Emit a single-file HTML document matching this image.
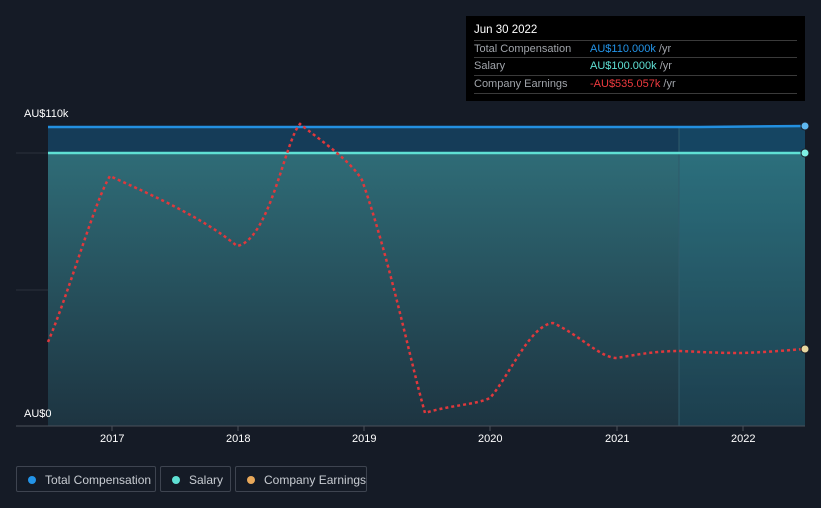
<!DOCTYPE html>
<html><head><style>
body{margin:0;background:#151b26;font-family:"Liberation Sans",sans-serif;}
.wrap{position:relative;width:821px;height:508px;overflow:hidden;background:#151b26;}
.tip{position:absolute;left:466px;top:16px;width:339px;height:85px;background:#000;color:#fff;font-size:11px;}
.tip .h{position:absolute;left:8px;top:8px;font-size:11.5px;}
.row{position:absolute;left:8px;width:323px;height:17px;border-top:1px solid #3a3a3a;color:#a0a4aa;line-height:17px;white-space:nowrap;}
.row span{position:absolute;left:116px;}
.leg{position:absolute;top:466px;height:26px;border:1px solid #3e4450;border-radius:2px;color:#c8ccd2;font-size:12px;line-height:26px;box-sizing:border-box;white-space:nowrap;}
.leg i{position:absolute;left:11px;top:9px;width:8px;height:8px;border-radius:50%;}
.leg b{font-weight:normal;position:absolute;left:28px;}
.ax{position:absolute;color:#fff;font-size:11px;}
</style></head><body><div class="wrap">
<svg width="821" height="508" style="position:absolute;left:0;top:0">
<defs>
<linearGradient id="g" x1="0" y1="0" x2="0" y2="1"><stop offset="0" stop-color="#2f6c77"/><stop offset="1" stop-color="#1d3441"/></linearGradient>
</defs>
<rect x="48" y="153" width="757" height="273" fill="url(#g)"/>
<rect x="48" y="127" width="757" height="26" fill="#153c58"/>
<rect x="679" y="127" width="126" height="299" fill="#1c8fb0" opacity="0.12"/>
<line x1="679" y1="127" x2="679" y2="426" stroke="#2f5a6a" stroke-width="1"/>
<line x1="16" y1="153" x2="48" y2="153" stroke="#2a313c"/>
<line x1="16" y1="290" x2="48" y2="290" stroke="#2a313c"/>
<line x1="16" y1="426" x2="805" y2="426" stroke="#4a505a"/>
<g stroke="#4a505a"><line x1="112" y1="426" x2="112" y2="431"/><line x1="238" y1="426" x2="238" y2="431"/><line x1="364" y1="426" x2="364" y2="431"/><line x1="490" y1="426" x2="490" y2="431"/><line x1="617" y1="426" x2="617" y2="431"/><line x1="743" y1="426" x2="743" y2="431"/></g>
<path d="M48 127 L700 127 L805 126" stroke="#2390e0" stroke-width="2.5" fill="none"/>
<line x1="48" y1="153" x2="805" y2="153" stroke="#5fe0d4" stroke-width="2.5"/>
<path d="M48 342 C70 290 95 200 110 176 C140 190 200 215 237 246 C270 240 285 140 300 124 C320 140 350 160 362 180 C390 260 410 360 425 413 C450 405 475 405 490 398 C510 375 530 325 553 323 C580 335 600 358 617 358 C650 352 665 351 680 351 C720 353 730 353 742 353 C770 352 790 350 805 349" stroke="#e0383c" stroke-width="2.5" stroke-dasharray="3,3" fill="none"/>
<circle cx="805" cy="126" r="4" fill="#5fb8f0" stroke="#1a1f29"/>
<circle cx="805" cy="153" r="4" fill="#7ff0e4" stroke="#1a1f29"/>
<circle cx="805" cy="349" r="4" fill="#e8d8a0" stroke="#1a1f29"/>
</svg>
<div class="ax" style="left:24px;top:108px">AU$110k</div>
<div class="ax" style="left:24px;top:408px">AU$0</div>
<div class="ax" style="left:100px;top:433px">2017</div>
<div class="ax" style="left:226px;top:433px">2018</div>
<div class="ax" style="left:352px;top:433px">2019</div>
<div class="ax" style="left:478px;top:433px">2020</div>
<div class="ax" style="left:605px;top:433px">2021</div>
<div class="ax" style="left:731px;top:433px">2022</div>
<div class="tip">
<div class="h">Jun 30 2022</div>
<div class="row" style="top:24px">Total Compensation<span style="color:#2394e8">AU$110.000k <span style="position:static;color:#a0a4aa">/yr</span></span></div>
<div class="row" style="top:41px">Salary<span style="color:#5fe0d4">AU$100.000k <span style="position:static;color:#a0a4aa">/yr</span></span></div>
<div class="row" style="top:59px;border-bottom:1px solid #3a3a3a">Company Earnings<span style="color:#ee3a3e">-AU$535.057k <span style="position:static;color:#a0a4aa">/yr</span></span></div>
</div>
<div class="leg" style="left:16px;width:140px"><i style="background:#2394e8"></i><b>Total Compensation</b></div>
<div class="leg" style="left:160px;width:71px"><i style="background:#5fe0d4"></i><b>Salary</b></div>
<div class="leg" style="left:235px;width:132px"><i style="background:#e8a85a"></i><b>Company Earnings</b></div>
</div></body></html>
